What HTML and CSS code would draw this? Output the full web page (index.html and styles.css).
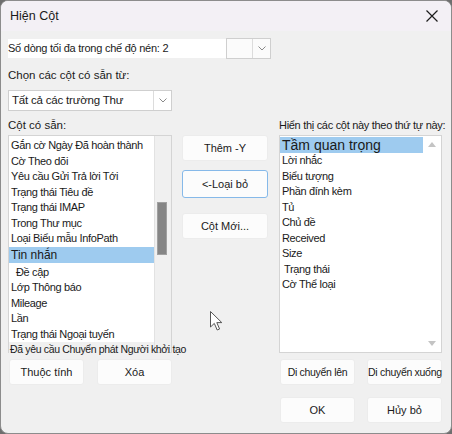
FILE: index.html
```html
<!DOCTYPE html>
<html lang="vi">
<head>
    <meta charset="UTF-8">
    <meta name="viewport" content="width=device-width, initial-scale=1.0">
    <title>Hiện Cột</title>
    <link rel="stylesheet" href="styles.css">
</head>
<body>

    <!-- Dialog window -->
    <div class="dialog">
        <div class="titlebar">
            <span class="title">Hiện Cột</span>
            <svg class="close" width="12" height="12" viewBox="0 0 12 12">
                <path d="M0.5 0.5 L11.5 11.5 M11.5 0.5 L0.5 11.5" stroke="#1c1c1c" stroke-width="1.2" fill="none"/>
            </svg>
        </div>

        <div class="content">
            <!-- Compact mode row -->
            <div class="compact-row">
                <div class="compact-label">Số dòng tối đa trong chế độ nén: 2</div>
                <div class="combo combo-small">
                    <div class="combo-text"></div>
                    <div class="combo-arrow">
                        <svg width="8" height="5" viewBox="0 0 8 5"><path d="M0.5 0.5 L4 4 L7.5 0.5" stroke="#8a8a8a" fill="none"/></svg>
                    </div>
                </div>
            </div>

            <div class="label label-choose">Chọn các cột có sẵn từ:</div>
            <div class="combo combo-source">
                <div class="combo-text">Tất cả các trường Thư</div>
                <div class="combo-arrow">
                    <svg width="8" height="5" viewBox="0 0 8 5"><path d="M0.5 0.5 L4 4 L7.5 0.5" stroke="#8a8a8a" fill="none"/></svg>
                </div>
            </div>

            <div class="columns">
                <!-- Available columns -->
                <div class="col">
                    <div class="label col-label">Cột có sẵn:</div>
                    <div class="listbox">
                        <div class="list-items">
                            <div class="item">Gắn cờ Ngày Đã hoàn thành</div>
                            <div class="item">Cờ Theo dõi</div>
                            <div class="item">Yêu cầu Gửi Trả lời Tới</div>
                            <div class="item">Trạng thái Tiêu đề</div>
                            <div class="item">Trạng thái IMAP</div>
                            <div class="item">Trong Thư mục</div>
                            <div class="item">Loại Biểu mẫu InfoPath</div>
                            <div class="item selected">Tin nhắn</div>
                            <div class="item indent">Đề cập</div>
                            <div class="item">Lớp Thông báo</div>
                            <div class="item">Mileage</div>
                            <div class="item">Lần</div>
                            <div class="item">Trạng thái Ngoại tuyến</div>
                            <div class="item overflow">Đã yêu cầu Chuyển phát Người khởi tạo</div>
                        </div>
                        <div class="scrollbar">
                            <div class="thumb"></div>
                        </div>
                    </div>
                    <div class="button-row">
                        <button class="btn">Thuộc tính</button>
                        <button class="btn">Xóa</button>
                    </div>
                </div>

                <!-- Middle actions -->
                <div class="col middle">
                    <button class="btn btn-mid">Thêm -Y</button>
                    <button class="btn btn-mid focused">&lt;-Loại bỏ</button>
                    <button class="btn btn-mid">Cột Mới...</button>
                </div>

                <!-- Shown columns -->
                <div class="col">
                    <div class="label col-label">Hiển thị các cột này theo thứ tự này:</div>
                    <div class="listbox listbox-right">
                        <div class="list-items">
                            <div class="item selected big">Tầm quan trọng</div>
                            <div class="item">Lời nhắc</div>
                            <div class="item">Biểu tượng</div>
                            <div class="item">Phần đính kèm</div>
                            <div class="item">Tủ</div>
                            <div class="item">Chủ đề</div>
                            <div class="item">Received</div>
                            <div class="item">Size</div>
                            <div class="item indent-small">Trạng thái</div>
                            <div class="item">Cờ Thể loại</div>
                        </div>
                        <div class="scrollbar scrollbar-light">
                            <svg width="8" height="5" viewBox="0 0 8 5"><path d="M0 5 L4 0 L8 5 Z" fill="#c4c4c4"/></svg>
                            <svg width="8" height="5" viewBox="0 0 8 5"><path d="M0 0 L4 5 L8 0 Z" fill="#c4c4c4"/></svg>
                        </div>
                    </div>
                    <div class="button-row">
                        <button class="btn">Di chuyển lên</button>
                        <button class="btn">Di chuyển xuống</button>
                    </div>
                    <div class="button-row button-row-last">
                        <button class="btn">OK</button>
                        <button class="btn">Hủy bỏ</button>
                    </div>
                </div>
            </div>
        </div>

        <!-- Mouse pointer over the dialog -->
        <svg class="cursor" width="14" height="21" viewBox="0 0 14 21">
            <path d="M0.5 0.5 L0.5 16 L4.3 12.4 L7.2 19 L9.6 18 L6.8 11.6 L11.8 11.6 Z" fill="#ffffff" stroke="#555555" stroke-width="1"/>
        </svg>
    </div>

</body>
</html>
```

FILE: styles.css
```css
body {
    margin: 0;
    background-color: #6e6e6e;
    font-family: "Liberation Sans", Arial, sans-serif;
    font-size: 11px;
    color: #1a1a1a;
}

.dialog {
    position: relative;
    width: 450px;
    height: 432px;
    border: 1px solid #8c8c8c;
    border-radius: 8px;
    background-color: #f0f0f0;
    overflow: hidden;
}

.titlebar {
    height: 30px;
    background-color: #f3f0f5;
    display: flex;
    align-items: center;
    justify-content: space-between;
    padding: 0 13px 0 9px;
}

.title {
    font-size: 12.5px;
}

.content {
    padding: 7px 7px 0 7px;
}

.compact-row {
    display: flex;
    align-items: center;
    height: 21px;
}

.compact-label {
    background-color: #ffffff;
    width: 219px;
    height: 19px;
    line-height: 19px;
    font-size: 11px;
    letter-spacing: -0.25px;
}

.combo {
    display: flex;
    border: 1px solid #cfcfcf;
    background-color: #ffffff;
    box-sizing: border-box;
}

.combo-small {
    width: 45px;
    height: 21px;
    margin-left: -1px;
    background-color: #fbfbfb;
}

.combo-text {
    flex: 1;
    padding-left: 3px;
    line-height: 19px;
    font-size: 11.5px;
    letter-spacing: -0.2px;
}

.combo-arrow {
    width: 17px;
    border-left: 1px solid #dcdcdc;
    display: flex;
    align-items: center;
    justify-content: center;
}

.combo-source {
    width: 164px;
    height: 21px;
    margin-top: 6px;
}

.label {
    font-size: 11.5px;
}

.label-choose {
    margin-top: 7px;
    height: 18px;
    line-height: 18px;
}

.columns {
    display: grid;
    grid-template-columns: 164px 86px 164px;
    column-gap: 10px;
    margin-top: 6px;
}

.columns .col:last-child {
    margin-left: 1px;
}

.col-label {
    height: 18px;
    line-height: 16px;
    white-space: nowrap;
}

.col:last-child .col-label {
    font-size: 11px;
    letter-spacing: -0.3px;
}

.listbox {
    display: flex;
    height: 218px;
    border: 1px solid #d4d4d4;
    box-sizing: border-box;
    background-color: #ffffff;
}

.list-items {
    flex: 1;
    padding-top: 2px;
    min-width: 0;
}

.item {
    height: 15.5px;
    line-height: 15.5px;
    padding-left: 2px;
    font-size: 11px;
    letter-spacing: -0.35px;
    white-space: nowrap;
}

.item.selected {
    background-color: #9ecbef;
    height: 16px;
    line-height: 16px;
    font-size: 12px;
    letter-spacing: 0;
}

.item.big {
    font-size: 14px;
    margin-top: -1px;
}

.item.indent {
    padding-left: 7px;
    margin-top: 2px;
}

.item.indent-small {
    padding-left: 4px;
}

.item.overflow {
    position: relative;
    z-index: 1;
    background-color: #f0f0f0;
    height: 16px;
    line-height: 15px;
    padding-left: 1px;
    font-size: 10.5px;
    letter-spacing: -0.35px;
}

.scrollbar {
    width: 16px;
    background-color: #f0f0f0;
    border-left: 1px solid #e2e2e2;
    position: relative;
}

.thumb {
    position: absolute;
    left: 2px;
    top: 66px;
    width: 10px;
    height: 53px;
    background-color: #858585;
    border: 1px solid #a0a0a0;
    box-sizing: border-box;
}

.scrollbar-light {
    width: 18px;
    background-color: #ffffff;
    border-left: none;
    display: flex;
    flex-direction: column;
    justify-content: space-between;
    align-items: center;
    padding: 6px 0 6px 0;
}

.btn {
    font-family: "Liberation Sans", Arial, sans-serif;
    font-size: 11px;
    color: #1a1a1a;
    background-color: #fcfcfc;
    border: 1px solid #ececec;
    border-radius: 3px;
    height: 26px;
    padding: 0;
    white-space: nowrap;
}

.button-row {
    display: flex;
    justify-content: space-between;
    margin-top: 6px;
    padding-left: 1px;
}

.button-row .btn {
    width: 75px;
    height: 26px;
}

.listbox-right + .button-row .btn {
    font-size: 10.5px;
    letter-spacing: -0.3px;
}

.button-row-last {
    margin-top: 12px;
}

.middle {
    display: flex;
    flex-direction: column;
    padding-top: 18px;
}

.btn-mid {
    width: 86px;
    margin-bottom: 9px;
}

.btn-mid.focused {
    height: 28px;
    border: 1px solid #86b9e9;
    margin-bottom: 15px;
}

.cursor {
    position: absolute;
    left: 209px;
    top: 310px;
}

.close {
    display: block;
}
```
